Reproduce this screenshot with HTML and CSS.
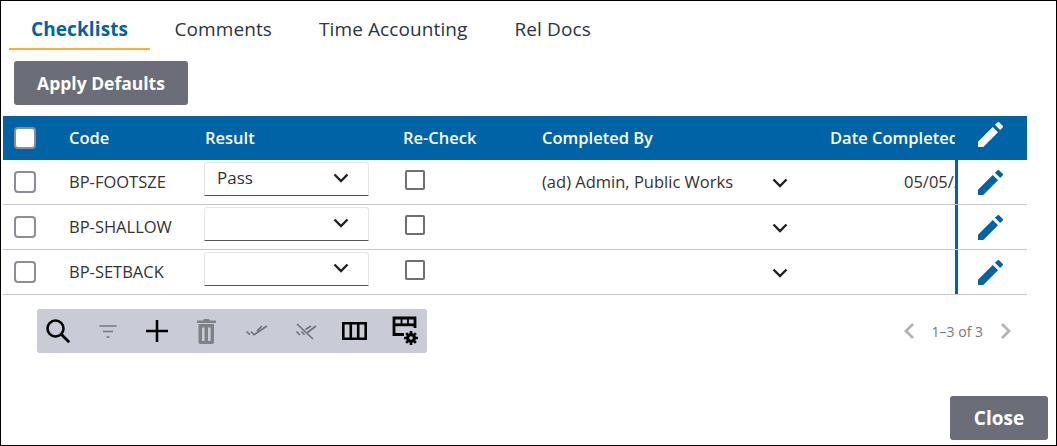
FILE: index.html
```html
<!DOCTYPE html>
<html lang="en">
<head>
<meta charset="utf-8">
<title>Checklists</title>
<link rel="stylesheet" href="styles.css">
</head>
<body>
<svg class="defs" width="0" height="0" aria-hidden="true">
  <defs>
    <symbol id="pencil" viewBox="3 3 18 18"><path d="M3 17.25V21h3.75L17.4 10.35l-3.75-3.75L3 17.25zM20.71 7.04a1 1 0 0 0 0-1.41l-2.34-2.34a1 1 0 0 0-1.41 0l-1.75 1.75 3.75 3.75 1.75-1.75z"/></symbol>
    <symbol id="chev" viewBox="0 0 16 10"><path d="M1.5 1.5 8 8l6.5-6.5" fill="none" stroke="currentColor" stroke-width="2.4"/></symbol>
  </defs>
</svg>
<nav class="tabs">
  <a class="tab active">Checklists</a>
  <a class="tab">Comments</a>
  <a class="tab">Time Accounting</a>
  <a class="tab">Rel Docs</a>
</nav>
<div class="actions"><button class="btn">Apply Defaults</button></div>
<div class="table">
  <div class="row head">
    <div class="cell"><span class="check white"></span></div>
    <div class="cell">Code</div>
    <div class="cell"><span class="result">Result</span></div>
    <div class="cell"><span class="recheck">Re-Check</span></div>
    <div class="cell">Completed By</div>
    <div class="cell clip">Date Completed</div>
    <div class="cell pen"><svg class="pencil"><use href="#pencil"/></svg></div>
  </div>
  <div class="row">
    <div class="cell"><span class="check"></span></div>
    <div class="cell">BP-FOOTSZE</div>
    <div class="cell"><div class="select"><span>Pass</span><svg class="chev"><use href="#chev"/></svg></div></div>
    <div class="cell"><span class="check small"></span></div>
    <div class="cell by"><span>(ad) Admin, Public Works</span><svg class="chev"><use href="#chev"/></svg></div>
    <div class="cell clip date">05/05/2023</div>
    <div class="cell pen"><svg class="pencil"><use href="#pencil"/></svg></div>
  </div>
  <div class="row">
    <div class="cell"><span class="check"></span></div>
    <div class="cell">BP-SHALLOW</div>
    <div class="cell"><div class="select"><span></span><svg class="chev"><use href="#chev"/></svg></div></div>
    <div class="cell"><span class="check small"></span></div>
    <div class="cell by"><span></span><svg class="chev"><use href="#chev"/></svg></div>
    <div class="cell clip date"></div>
    <div class="cell pen"><svg class="pencil"><use href="#pencil"/></svg></div>
  </div>
  <div class="row">
    <div class="cell"><span class="check"></span></div>
    <div class="cell">BP-SETBACK</div>
    <div class="cell"><div class="select"><span></span><svg class="chev"><use href="#chev"/></svg></div></div>
    <div class="cell"><span class="check small"></span></div>
    <div class="cell by"><span></span><svg class="chev"><use href="#chev"/></svg></div>
    <div class="cell clip date"></div>
    <div class="cell pen"><svg class="pencil"><use href="#pencil"/></svg></div>
  </div>
</div>
<div class="footer">
  <div class="toolbar">
    <svg class="tool" viewBox="0 0 26 26"><circle cx="10.5" cy="10.5" r="8" fill="none" stroke="#000" stroke-width="2.6"/><path d="m16 16 8.2 8.2" stroke="#000" stroke-width="2.8" fill="none"/></svg>
    <svg class="tool" viewBox="0 0 26 26"><path d="M5.500 8h17M9 13.500h10M12.500 19h3" stroke="#74767c" stroke-width="1.700" fill="none"/></svg>
    <svg class="tool" viewBox="0 0 26 26"><path d="M13 2v22M2 13h22" stroke="#000" stroke-width="2.500" fill="none"/></svg>
    <svg class="tool" viewBox="0 0 26 26"><path fill="#7f8186" fill-rule="evenodd" d="M4 2.500h6l1-1.500h5l1 1.500h6V5H4zM5.500 6H21v18a2 2 0 0 1-2 2H7.500a2 2 0 0 1-2-2zM9 9.500V23h2.600V9.500zm6 0V23h2.600V9.500z"/></svg>
    <svg class="tool" viewBox="0 0 26 26"><path d="M3.500 13.500l3.500 3.200M8 13.500l3 3.300L24 8M14 13l5-5" stroke="#6f7176" stroke-width="1.600" fill="none"/></svg>
    <svg class="tool" viewBox="0 0 26 26"><path d="M4.500 13.500 8 17M9.500 13.500l3 3.300M15.500 14.500 24 8M13.500 11.500 19 8M5 6l16 15" stroke="#6f7176" stroke-width="1.600" fill="none"/></svg>
    <svg class="tool" viewBox="0 0 26 26"><path d="M2.300 5.300h22.400v15.400H2.300zM9.800 5.300v15.400M17.200 5.300v15.400" stroke="#000" stroke-width="2.600" fill="none"/></svg>
    <svg class="tool" viewBox="0 0 26 26"><path d="M13 16.500H3V0h21v10" stroke="#000" stroke-width="2.800" fill="none"/><path d="M3 6.800h21" stroke="#000" stroke-width="2.800"/><path d="M10.500 0v6M17 0v6" stroke="#000" stroke-width="1.800"/><path d="M20 13v14M13 20h14M15.100 15.100l9.800 9.800M24.900 15.100l-9.800 9.800" stroke="#000" stroke-width="2.600"/><circle cx="20" cy="20" r="5" fill="#000"/><circle cx="20" cy="20" r="1.800" fill="#c9ccd6"/></svg>
  </div>
  <div class="pager">
    <svg class="arrow" viewBox="0 0 12 18"><path d="M10 2 3 9l7 7" fill="none" stroke="#b4b4b4" stroke-width="2.800"/></svg>
    <span>1–3 of 3</span>
    <svg class="arrow" viewBox="0 0 12 18"><path d="m2 2 7 7-7 7" fill="none" stroke="#b4b4b4" stroke-width="2.800"/></svg>
  </div>
</div>
<div class="bottom"><button class="btn close">Close</button></div>
</body>
</html>
```
FILE: styles.css
```css
* { box-sizing: border-box; }
html, body { margin: 0; padding: 0; }
body {
  width: 1057px;
  height: 446px;
  border: 1px solid #000;
  padding-left: 2px;
  display: flex;
  flex-direction: column;
  font-family: "Open Sans", "Liberation Sans", sans-serif;
  color: #333;
  background: #fff;
  overflow: hidden;
}
.defs { position: absolute; }
.tabs { display: flex; height: 49px; padding-left: 6px; font-size: 19px; letter-spacing: .1px; }
.tab {
  height: 49px;
  padding: 15px 23.500px 0;
  color: #2c3442;
  line-height: 26px;
}
.tab.active {
  width: 141px;
  padding: 15px 0 0 22px;
  color: #0063a5;
  font-weight: 700;
  border-bottom: 2px solid #fbb034;
  margin-right: 1px;
}
.actions { padding: 11px 0 0 11px; height: 66px; }
.btn {
  border: 0;
  border-radius: 3px;
  background: #6b6e78;
  color: #fff;
  font: 700 17.500px/26px "Open Sans", "Liberation Sans", sans-serif;
  width: 174px;
  height: 44px;
  padding: 0;
}
.table { width: 1024px; }
.row {
  display: grid;
  grid-template-columns: 66px 135px 201px 137px 288px 125px 72px;
  height: 45px;
  font-size: 16.500px;
  line-height: 20px;
  border-bottom: 1px solid #c8c8c8;
}
.row.head {
  height: 44px;
  background: #0063a5;
  color: #fff;
  font-weight: 600;
  font-size: 16.500px;
  border: 0;
}
.cell { display: flex; align-items: center; min-width: 0; white-space: nowrap; }
.result { margin-left: 1px; }
.recheck { margin-left: -2px; }
.check {
  width: 22px;
  height: 22px;
  margin-left: 11px;
  border: 2px solid #8a8d9c;
  border-radius: 4px;
  background: #fff;
}
.check.small { width: 20px; height: 20px; margin: -4px 0 0 0; border-color: #707070; border-radius: 2px; }
.select {
  width: 165px;
  height: 34px;
  margin-top: -7px;
  display: flex;
  align-items: center;
  justify-content: space-between;
  padding: 0 19px 1px 12px;
  border: 1px solid #e6e6e6;
  border-bottom: 1px solid #555;
  border-radius: 3px 3px 0 0;
  font-size: 17px;
}
.chev { width: 16px; height: 10px; color: #222; }
.by { justify-content: space-between; padding-right: 42px; }
.by .chev { margin-top: 2px; }
.clip { overflow: hidden; }
.date { padding-left: 74px; }
.pen { border-left: 3px solid #0063a5; padding-left: 20px; fill: #0063a5; }
.head .pen { fill: #fff; }
.pencil { width: 25px; height: 25px; margin-top: 1px; }
.head .pencil { margin-top: -7px; }
.footer {
  display: flex;
  justify-content: space-between;
  align-items: center;
  margin-top: 14px;
  padding: 0 44px 0 34px;
}
.toolbar {
  width: 390px;
  height: 44px;
  display: flex;
  align-items: center;
  gap: 23.400px;
  padding-left: 8px;
  background: #c9ccd6;
  border-radius: 3px;
  flex: none;
}
.tool { width: 26px; height: 26px; flex: none; overflow: visible; }
.pager { display: flex; align-items: center; gap: 17px; font-size: 14px; color: #75787f; }
.arrow { width: 12px; height: 18px; }
.bottom { display: flex; justify-content: flex-end; padding: 43px 8px 0 0; }
.btn.close { width: 98px; font-size: 19px; }
```
